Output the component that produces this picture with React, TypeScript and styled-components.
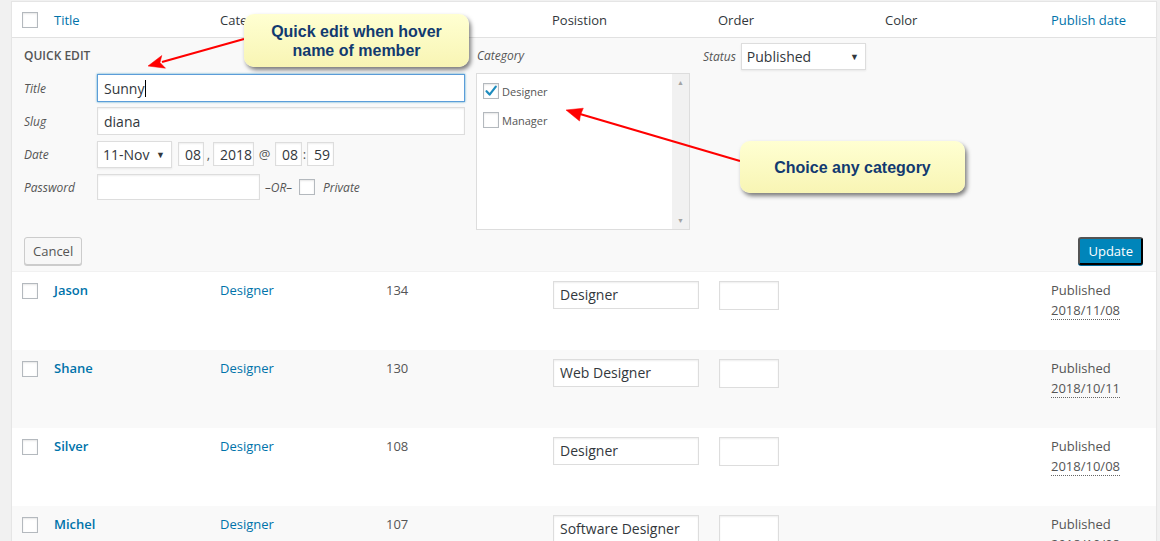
import React from 'react';
import styled, { createGlobalStyle } from 'styled-components';

const GlobalStyle = createGlobalStyle`
  html, body {
    margin: 0;
    padding: 0;
    background: #f1f1f1;
  }
  body {
    font-family: "Open Sans", "Noto Sans", Arial, sans-serif;
    font-size: 13px;
    color: #32373c;
  }
  * { box-sizing: border-box; }
`;

const COLUMNS = '32px 166px 166px 166px 166px 167px 166px 1fr';

interface Member {
  name: string;
  category: string;
  id: number;
  position: string;
  date: string;
}

const members: Member[] = [
  { name: 'Jason', category: 'Designer', id: 134, position: 'Designer', date: '2018/11/08' },
  { name: 'Shane', category: 'Designer', id: 130, position: 'Web Designer', date: '2018/10/11' },
  { name: 'Silver', category: 'Designer', id: 108, position: 'Designer', date: '2018/10/08' },
  { name: 'Michel', category: 'Designer', id: 107, position: 'Software Designer', date: '2018/10/08' },
];

const Page = styled.div`
  position: relative;
  height: 541px;
  overflow: hidden;
  padding: 1px 0 0 11px;
`;

const Table = styled.div`
  width: 1146px;
  background: #fff;
  border: 1px solid #e5e5e5;
  border-bottom: none;
  box-shadow: 0 1px 1px rgba(0, 0, 0, 0.04);
`;

const HeaderRow = styled.div`
  display: grid;
  grid-template-columns: ${COLUMNS};
  height: 36px;
  align-items: center;
  border-bottom: 1px solid #e1e1e1;
`;

const HeaderCell = styled.div<{ $sortable?: boolean }>`
  padding: 0 10px;
  font-size: 13px;
  color: ${p => (p.$sortable ? '#0073aa' : '#32373c')};
  white-space: nowrap;
`;

const CheckCell = styled.div`
  padding-left: 10px;
  display: flex;
`;

const Checkbox = styled.span<{ $checked?: boolean }>`
  position: relative;
  display: inline-block;
  width: 16px;
  height: 16px;
  flex: none;
  background: #fff;
  border: 1px solid #b4b9be;
  box-shadow: inset 0 1px 2px rgba(0, 0, 0, 0.1);
`;

const CheckMark = styled.svg`
  position: absolute;
  left: 0;
  top: 0;
`;

/* quick edit panel */

const QuickEdit = styled.div`
  background: #f9f9f9;
  padding: 5px 13px 6px 12px;
  height: 234px;
  border-bottom: 1px solid #f1f1f1;
`;

const EditColumns = styled.div`
  display: flex;
  align-items: flex-start;
  height: 187px;
`;

const LeftFields = styled.div`
  width: 441px;
  padding-top: 4px;
  display: flex;
  flex-direction: column;
  gap: 5px;
`;

const PanelTitle = styled.div`
  height: 18px;
  line-height: 18px;
  font-size: 12px;
  font-weight: 600;
  color: #555;
  text-transform: uppercase;
  margin-bottom: 4px;
`;

const FieldRow = styled.div`
  display: flex;
  align-items: center;
  height: 28px;
`;

const FieldLabel = styled.span<{ $width?: number }>`
  width: ${p => (p.$width ? `${p.$width}px` : 'auto')};
  flex: none;
  font-size: 12px;
  font-style: italic;
  color: #555;
`;

const TextBox = styled.div<{ $width?: number; $height?: number; $focused?: boolean }>`
  display: flex;
  align-items: center;
  width: ${p => (p.$width ? `${p.$width}px` : 'auto')};
  flex: ${p => (p.$width ? 'none' : '1')};
  height: ${p => p.$height ?? 28}px;
  padding: 0 6px;
  background: #fff;
  border: 1px solid ${p => (p.$focused ? '#5b9dd9' : '#ddd')};
  box-shadow: ${p =>
    p.$focused ? '0 0 2px rgba(30, 140, 190, 0.8)' : 'inset 0 1px 2px rgba(0, 0, 0, 0.07)'};
  font-size: 14px;
  color: #32373c;
  white-space: nowrap;
  overflow: hidden;
`;

const Caret = styled.span`
  display: inline-block;
  width: 1px;
  height: 17px;
  background: #000;
  margin-left: 1px;
`;

const SelectBox = styled(TextBox)`
  justify-content: space-between;
  padding: 0 6px 0 5px;
  box-shadow: 0 1px 2px rgba(0, 0, 0, 0.07);
`;

const SelectArrow = styled.span`
  font-size: 9px;
  color: #32373c;
`;

const Sep = styled.span<{ $w: number }>`
  width: ${p => p.$w}px;
  flex: none;
  text-align: center;
  font-size: 13px;
  color: #555;
`;

const OrText = styled.span`
  margin: 0 7px 0 5px;
  font-size: 12px;
  font-style: italic;
  color: #555;
`;

const PrivateLabel = styled.span`
  margin-left: 8px;
  font-size: 12px;
  font-style: italic;
  color: #555;
`;

const CategoryCol = styled.div`
  width: 214px;
  margin-left: 11px;
  padding-top: 4px;
`;

const ColLabel = styled.div`
  height: 18px;
  line-height: 18px;
  font-size: 12px;
  font-style: italic;
  color: #555;
  margin-left: 1px;
`;

const CategoryBox = styled.div`
  display: flex;
  margin-top: 8px;
  height: 157px;
  background: #fff;
  border: 1px solid #ddd;
`;

const CategoryList = styled.div`
  flex: 1;
  padding: 9px 6px;
  display: flex;
  flex-direction: column;
  gap: 13px;
`;

const CategoryItem = styled.div`
  display: flex;
  align-items: center;
  gap: 3px;
  font-size: 11px;
  color: #555;
`;

const ScrollTrack = styled.div`
  width: 17px;
  background: #f1f1f1;
  display: flex;
  flex-direction: column;
  justify-content: space-between;
  align-items: center;
  padding: 4px 0;
  font-size: 7px;
  color: #a3a3a3;
`;

const StatusCol = styled.div`
  margin-left: 13px;
  display: flex;
  align-items: center;
  gap: 5px;
`;

const ButtonRow = styled.div`
  display: flex;
  justify-content: space-between;
  align-items: center;
  margin-top: 7px;
`;

const Button = styled.button<{ $primary?: boolean }>`
  height: 28px;
  padding: 0 8px 1px;
  font-family: inherit;
  font-size: 13px;
  border-radius: 3px;
  border: 1px solid ${p => (p.$primary ? '#0073aa #006799 #006799' : '#ccc')};
  background: ${p => (p.$primary ? '#0085ba' : '#f7f7f7')};
  color: ${p => (p.$primary ? '#fff' : '#555')};
  box-shadow: 0 1px 0 ${p => (p.$primary ? '#006799' : '#ccc')};
  cursor: pointer;
`;

/* member rows */

const Row = styled.div<{ $alt?: boolean }>`
  display: grid;
  grid-template-columns: ${COLUMNS};
  height: 78px;
  align-items: start;
  background: ${p => (p.$alt ? '#f9f9f9' : '#fff')};
`;

const RowCheck = styled(CheckCell)`
  padding-top: 11px;
`;

const Cell = styled.div`
  padding: 8px 10px;
  line-height: 20px;
  font-size: 13px;
  color: #555;
`;

const NameLink = styled.a`
  font-weight: 600;
  color: #0073aa;
  text-decoration: none;
`;

const CatLink = styled.a`
  color: #0073aa;
  text-decoration: none;
`;

const RowInput = styled(TextBox)`
  margin: 1px 0 0 1px;
`;

const DateAbbr = styled.abbr`
  text-decoration: none;
  border-bottom: 1px dotted #666;
`;

/* annotations */

const Callout = styled.div<{ $x: number; $y: number; $w: number; $h: number }>`
  position: absolute;
  left: ${p => p.$x}px;
  top: ${p => p.$y}px;
  width: ${p => p.$w}px;
  height: ${p => p.$h}px;
  display: flex;
  align-items: center;
  justify-content: center;
  text-align: center;
  border-radius: 10px;
  background: linear-gradient(#ffffd2, #f8f5b4);
  box-shadow: 2px 3px 4px rgba(0, 0, 0, 0.5);
  font-family: "Liberation Sans", Arial, sans-serif;
  font-weight: bold;
  font-size: 16px;
  line-height: 19px;
  color: #123a70;
  z-index: 3;
`;

const ArrowLayer = styled.svg`
  position: absolute;
  left: 0;
  top: 0;
  pointer-events: none;
  z-index: 2;
`;

const Tick = () => (
  <CheckMark width="14" height="14" viewBox="0 0 14 14">
    <path d="M2.5 7.2 L5.6 10.6 L11.8 2.6" fill="none" stroke="#1e8cbe" strokeWidth="2.2" strokeLinecap="round" strokeLinejoin="round" />
  </CheckMark>
);

const Arrows = () => (
  <ArrowLayer width="1160" height="541">
    <g fill="#f00" stroke="#f00">
      <line x1="244" y1="39" x2="162" y2="62" strokeWidth="2.2" />
      <polygon points="148,66 161.8,55.5 160,62.5 165.5,68.2" strokeWidth="0.5" />
      <line x1="740" y1="161" x2="580" y2="114" strokeWidth="2.2" />
      <polygon points="566,110 583.3,108.2 580.5,114.8 579.5,121" strokeWidth="0.5" />
    </g>
  </ArrowLayer>
);

export default function App() {
  return (
    <>
      <GlobalStyle />
      <Page>
        <Table>
          <HeaderRow>
            <CheckCell><Checkbox /></CheckCell>
            <HeaderCell $sortable>Title</HeaderCell>
            <HeaderCell>Category</HeaderCell>
            <HeaderCell>ID</HeaderCell>
            <HeaderCell>Posistion</HeaderCell>
            <HeaderCell>Order</HeaderCell>
            <HeaderCell>Color</HeaderCell>
            <HeaderCell $sortable>Publish date</HeaderCell>
          </HeaderRow>

          <QuickEdit>
            <EditColumns>
              <LeftFields>
                <PanelTitle>Quick Edit</PanelTitle>
                <FieldRow>
                  <FieldLabel $width={73}>Title</FieldLabel>
                  <TextBox $focused>Sunny<Caret /></TextBox>
                </FieldRow>
                <FieldRow>
                  <FieldLabel $width={73}>Slug</FieldLabel>
                  <TextBox>diana</TextBox>
                </FieldRow>
                <FieldRow>
                  <FieldLabel $width={73}>Date</FieldLabel>
                  <SelectBox $width={75} $height={27}>11-Nov<SelectArrow>▼</SelectArrow></SelectBox>
                  <Sep $w={6} />
                  <TextBox $width={26} $height={24}>08</TextBox>
                  <Sep $w={9}>,</Sep>
                  <TextBox $width={41} $height={24}>2018</TextBox>
                  <Sep $w={21}>@</Sep>
                  <TextBox $width={27} $height={24}>08</TextBox>
                  <Sep $w={5}>:</Sep>
                  <TextBox $width={27} $height={24}>59</TextBox>
                </FieldRow>
                <FieldRow>
                  <FieldLabel $width={73}>Password</FieldLabel>
                  <TextBox $width={163} $height={26} />
                  <OrText>–OR–</OrText>
                  <Checkbox />
                  <PrivateLabel>Private</PrivateLabel>
                </FieldRow>
              </LeftFields>

              <CategoryCol>
                <ColLabel>Category</ColLabel>
                <CategoryBox>
                  <CategoryList>
                    <CategoryItem><Checkbox $checked><Tick /></Checkbox>Designer</CategoryItem>
                    <CategoryItem><Checkbox />Manager</CategoryItem>
                  </CategoryList>
                  <ScrollTrack>
                    <span>▲</span>
                    <span>▼</span>
                  </ScrollTrack>
                </CategoryBox>
              </CategoryCol>

              <StatusCol>
                <FieldLabel>Status</FieldLabel>
                <SelectBox $width={125} $height={27}>Published<SelectArrow>▼</SelectArrow></SelectBox>
              </StatusCol>
            </EditColumns>

            <ButtonRow>
              <Button>Cancel</Button>
              <Button $primary>Update</Button>
            </ButtonRow>
          </QuickEdit>

          {members.map((m, i) => (
            <Row key={m.id} $alt={i % 2 === 1}>
              <RowCheck><Checkbox /></RowCheck>
              <Cell><NameLink href="#">{m.name}</NameLink></Cell>
              <Cell><CatLink href="#">{m.category}</CatLink></Cell>
              <Cell>{m.id}</Cell>
              <Cell><RowInput $width={146}>{m.position}</RowInput></Cell>
              <Cell><RowInput $width={60} $height={29} /></Cell>
              <Cell />
              <Cell>
                Published<br />
                <DateAbbr title={m.date}>{m.date}</DateAbbr>
              </Cell>
            </Row>
          ))}
        </Table>

        <Callout $x={244} $y={14} $w={225} $h={53}>
          Quick edit when hover<br />name of member
        </Callout>
        <Callout $x={740} $y={141} $w={225} $h={52}>
          Choice any category
        </Callout>
        <Arrows />
      </Page>
    </>
  );
}
